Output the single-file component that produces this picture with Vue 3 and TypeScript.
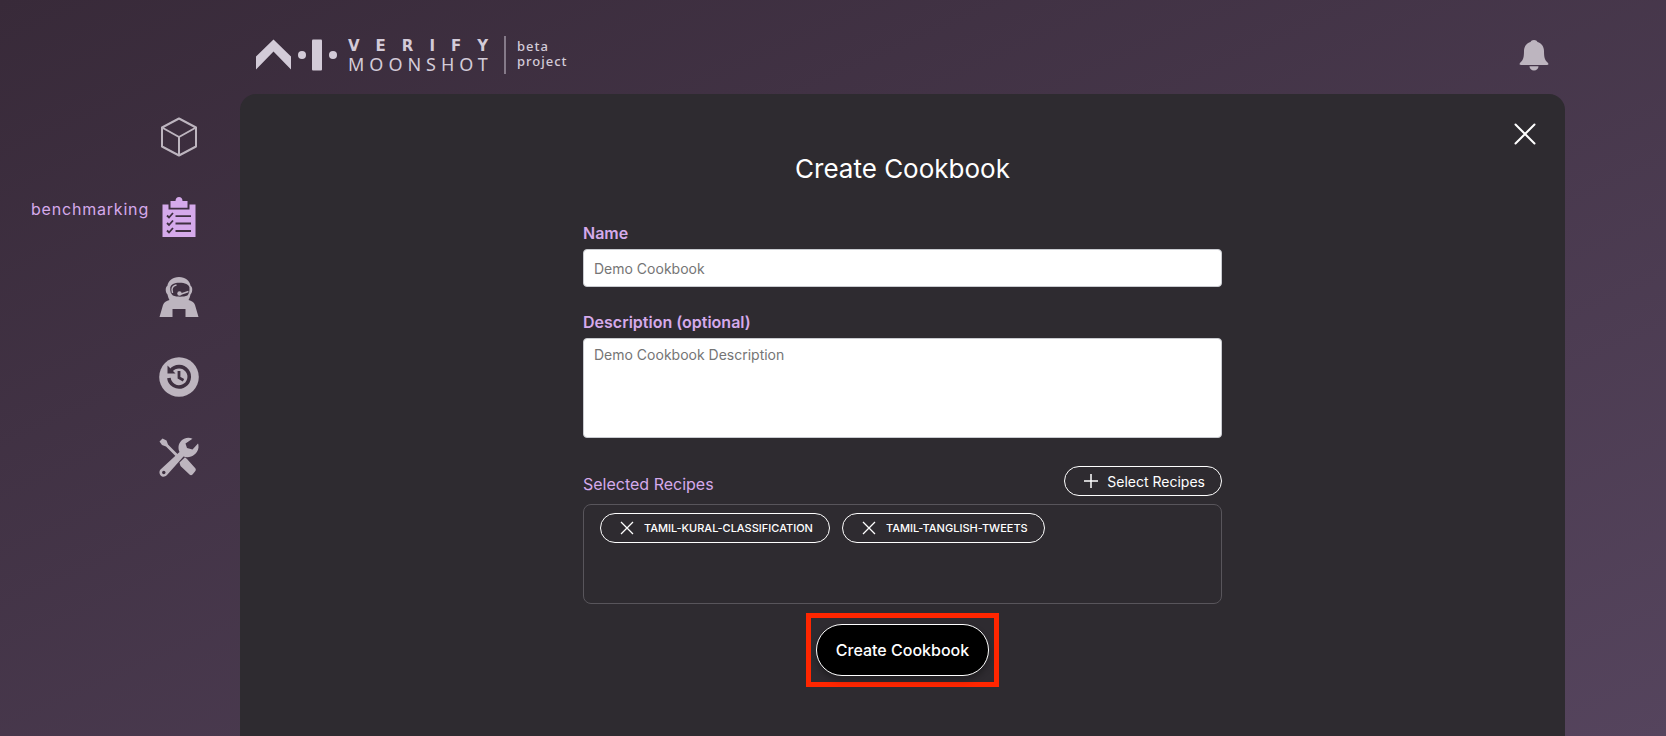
<script setup lang="ts">
import { ref } from 'vue'

interface NavItem {
  id: string
  label: string
}

const navItems: NavItem[] = [
  { id: 'home', label: 'home' },
  { id: 'benchmarking', label: 'benchmarking' },
  { id: 'redteaming', label: 'red teaming' },
  { id: 'history', label: 'history' },
  { id: 'utilities', label: 'utilities' },
]
const active = ref<string>('benchmarking')

const name = ref<string>('')
const description = ref<string>('')
const recipes = ref<string[]>(['TAMIL-KURAL-CLASSIFICATION', 'TAMIL-TANGLISH-TWEETS'])

function removeRecipe(recipe: string): void {
  recipes.value = recipes.value.filter((r) => r !== recipe)
}
</script>

<template>
  <div class="page">
    <header class="topbar">
      <a class="logo" href="#" aria-label="AI Verify Moonshot">
        <svg class="logo-mark" width="82" height="32" viewBox="0 0 82 32" aria-hidden="true">
          <path d="M0 17.500 17.500 0.500 35 17.500V30.500L17.500 12.500 0 30.500z" />
          <circle cx="46" cy="16" r="4" />
          <rect x="56" y="0.500" width="10" height="31" rx="1" />
          <circle cx="77" cy="16" r="4" />
        </svg>
        <span class="logo-words">
          <span class="verify">VERIFY</span>
          <span class="moonshot">MOONSHOT</span>
        </span>
        <span class="logo-beta">beta<br />project</span>
      </a>
      <button class="bell" type="button" aria-label="Notifications">
        <svg width="30" height="32" viewBox="0 0 30 32" aria-hidden="true">
          <path d="M15 1c1.800 0 3 .8 3.500 2C22.500 4.300 25 7.500 25 12c0 6 .6 9 4 12 .8 1.200.3 2-.8 2H1.800c-1.100 0-1.600-.8-.8-2C4.400 21 5 18 5 12c0-4.500 2.500-7.700 6.500-9C12 1.800 13.200 1 15 1zM10.500 27.200h9c0 2.500-2 4.300-4.500 4.300s-4.500-1.800-4.500-4.300z" />
        </svg>
      </button>
    </header>

    <nav class="sidebar" aria-label="Main">
      <a
        v-for="item in navItems"
        :key="item.id"
        href="#"
        class="nav-item"
        :class="{ active: item.id === active }"
        :aria-label="item.label"
        @click.prevent="active = item.id"
      >
        <span v-if="item.id === active" class="nav-label">{{ item.label }}</span>
        <svg v-if="item.id === 'home'" width="40" height="40" viewBox="0 0 40 40" aria-hidden="true">
          <path d="M20 1.500 37 10.500V29.500L20 38.500 3 29.500V10.500zM3 10.500 20 20 37 10.500M20 20V38.500" fill="none" stroke="currentColor" stroke-width="2" stroke-linejoin="round" />
        </svg>
        <svg v-else-if="item.id === 'benchmarking'" width="40" height="40" viewBox="0 0 40 40" aria-hidden="true">
          <path d="M3.500 7.500H9.500V12.500H30.500V7.500H36.500V40H3.500z" fill="currentColor" />
          <path d="M11.500 4H16.500C16.500 1.500 18 0 20 0S23.500 1.500 23.500 4H28.500V10.800H11.500z" fill="currentColor" />
          <path d="M8 18.500l2 2 4-4.500M8 26l2 2 4-4.500M8 33.500l2 2 4-4.500M16.500 19.200H32M16.500 26.500H32M16.500 34H32" fill="none" class="ink" stroke-width="1.800" />
        </svg>
        <svg v-else-if="item.id === 'redteaming'" width="40" height="40" viewBox="0 0 40 40" aria-hidden="true">
          <path d="M20 0c6.500 0 10.500 3.500 11.700 9 2.200 1 2 6.500-.2 8.500-.5 2-1 4-2 5.500 3 .8 5.500 2 6.500 5L39.500 40H26.500V32H13.500V40H.5L4 28c1-3 3.500-4.200 6.500-5-1-1.500-1.500-3.500-2-5.500C6.300 15.500 6.100 10 8.300 9 9.500 3.500 13.500 0 20 0z" fill="currentColor" />
          <path d="M20.500 5.800C26 5.800 30 7.500 30.400 10.500c.4 3.500-.4 6.500-2 8-4 1.600-10.500 1.600-14.500 0-2-1.500-3-4.500-2.600-8C11.800 7.500 15 5.800 20.500 5.800z" class="ink-fill" />
          <path d="M17.500 8C14.500 8.600 13.200 9.500 13 12.500L13.500 16" fill="none" stroke="currentColor" stroke-width="1.400" />
          <path d="M29.500 14.500 21.500 17.200" fill="none" stroke="currentColor" stroke-width="1.500" />
          <circle cx="20.500" cy="16.500" r="2.200" fill="currentColor" />
        </svg>
        <svg v-else-if="item.id === 'history'" width="40" height="40" viewBox="0 0 40 40" aria-hidden="true">
          <circle cx="20" cy="20" r="19.800" fill="currentColor" />
          <path d="M12 13.500A10.200 10.200 0 1 1 9.900 21" fill="none" class="ink" stroke-width="3.600" />
          <path d="M8.500 8.500V16.500H16.500z" class="ink-fill" />
          <path d="M20 14V20.800L24.500 23.300" fill="none" class="ink" stroke-width="2.800" />
        </svg>
        <svg v-else width="40" height="40" viewBox="0 0 40 40" aria-hidden="true">
          <path d="M.5 4.500 3.500 1.500 7.500 3.500 9 7.500 20 18.500 18 20.500 7 9.500 3 8z" fill="currentColor" />
          <path d="M20.500 25.500 26 20.200 28 22 36.500 31.500Q37.500 33 36 34.500L33.500 37.500Q32 38.800 30.500 37.500L21.500 29z" fill="currentColor" />
          <path d="M33.500 1.800C28 -1.500 20 2.500 19.500 10c0 2 .2 3.500 1 5L1.500 32.500c-2 2-1 6 1.500 7 2 .5 3.500 0 5-1.500L24.500 19.500c6 2.500 14-1.500 15-9 0-1.500 0-3-.5-4L33.500 12.500 28 11 26.500 6.500z" fill="currentColor" />
          <circle cx="4.800" cy="35.500" r="1.700" class="ink-fill" />
        </svg>
      </a>
    </nav>

    <main class="panel">
      <button class="close" type="button" aria-label="Close">
        <svg width="22" height="22" viewBox="0 0 22 22" aria-hidden="true">
          <path d="M1.500 1.500 20.500 20.500M20.500 1.500 1.500 20.500" fill="none" stroke="currentColor" stroke-width="2" stroke-linecap="round" />
        </svg>
      </button>
      <form class="form" @submit.prevent>
        <h1 class="title">Create Cookbook</h1>

        <div class="field">
          <label class="label" for="cookbook-name">Name</label>
          <input id="cookbook-name" v-model="name" class="control" type="text" placeholder="Demo Cookbook" />
        </div>

        <div class="field">
          <label class="label" for="cookbook-description">Description (optional)</label>
          <textarea id="cookbook-description" v-model="description" class="control area" placeholder="Demo Cookbook Description"></textarea>
        </div>

        <section class="recipes" aria-labelledby="recipes-title">
          <div class="recipes-head">
            <h2 id="recipes-title" class="recipes-title">Selected Recipes</h2>
            <button class="pill select" type="button">
              <svg width="14" height="14" viewBox="0 0 14 14" aria-hidden="true">
                <path d="M7 0V14M0 7H14" fill="none" stroke="currentColor" stroke-width="1.500" />
              </svg>
              Select Recipes
            </button>
          </div>
          <div class="recipes-box">
            <button v-for="recipe in recipes" :key="recipe" class="pill chip" type="button" @click="removeRecipe(recipe)">
              <svg width="14" height="14" viewBox="0 0 14 14" aria-hidden="true">
                <path d="M1 1 13 13M13 1 1 13" fill="none" stroke="currentColor" stroke-width="1.300" />
              </svg>
              {{ recipe }}
            </button>
          </div>
        </section>

        <div class="highlight">
          <button class="submit" type="submit">Create Cookbook</button>
        </div>
      </form>
    </main>
  </div>
</template>

<style>
html,
body {
  margin: 0;
  background: #3c2e3e;
}
</style>

<style scoped>
.page {
  --lilac: #d5aaeb;
  --ink: #3e3040;
  box-sizing: border-box;
  min-height: 100vh;
  padding-right: 101px;
  display: grid;
  grid-template-columns: 240px minmax(0, 1fr);
  grid-template-rows: 94px 1fr;
  background: linear-gradient(to bottom right, #382a39, #55445d);
  color: #fff;
  font-family: Inter, "Liberation Sans", sans-serif;
  font-size: 16px;
}

button {
  font: inherit;
  color: inherit;
  cursor: pointer;
}

.topbar {
  grid-column: 2;
  display: flex;
  align-items: center;
  justify-content: space-between;
  padding: 16px 16px 0;
}

.logo {
  display: flex;
  align-items: center;
  color: #d3cbd8;
  text-decoration: none;
}

.logo-mark {
  fill: currentColor;
}

.logo-words {
  display: flex;
  flex-direction: column;
  width: 155px;
  margin-left: 10px;
  padding-top: 2px;
}

.verify {
  font: 700 15px/16px "DejaVu Sans", sans-serif;
  letter-spacing: 16px;
}

.moonshot {
  font: 400 18px/20px "Noto Sans", sans-serif;
  letter-spacing: 5px;
}

.logo-beta {
  margin-left: 1px;
  padding: 3px 0 5px 11px;
  border-left: 2px solid #857a89;
  font: 500 13px/15px "Noto Sans", sans-serif;
  letter-spacing: 1px;
}

.bell,
.close {
  display: flex;
  padding: 0;
  border: 0;
  background: none;
}

.bell {
  color: #bdb5bf;
}

.bell svg {
  fill: currentColor;
}

.sidebar {
  grid-column: 1;
  display: flex;
  flex-direction: column;
  gap: 40px;
  padding: 23px 41px 0 0;
}

.nav-item {
  display: flex;
  justify-content: flex-end;
  gap: 10px;
  color: #bdb5bf;
  text-decoration: none;
}

.nav-item.active {
  color: var(--lilac);
}

.nav-item svg {
  flex: none;
}

.nav-label {
  line-height: 24px;
  letter-spacing: 0.05em;
}

.ink {
  stroke: var(--ink);
}

.ink-fill {
  fill: var(--ink);
}

.panel {
  position: relative;
  padding: 57px 24px 48px;
  border-radius: 16px 16px 0 0;
  background: #2e2b30;
}

.close {
  position: absolute;
  top: 29px;
  right: 29px;
}

.form {
  display: flex;
  flex-direction: column;
  max-width: 639px;
  margin: 0 auto;
}

.title {
  margin: 0 0 34px;
  font-size: 26px;
  font-weight: 400;
  line-height: 36px;
  text-align: center;
}

.field {
  display: flex;
  flex-direction: column;
  gap: 4px;
  margin-bottom: 23px;
}

.label {
  color: var(--lilac);
  font-weight: 600;
  line-height: 24px;
}

.control {
  box-sizing: border-box;
  width: 100%;
  height: 38px;
  padding: 8px 10px;
  border: 1px solid #c9cbd0;
  border-radius: 4px;
  background: #fff;
  color: #222;
  font: 400 14px/20px Inter, "Liberation Sans", sans-serif;
}

.control::placeholder {
  color: #757575;
  opacity: 1;
}

.area {
  height: 100px;
  padding-top: 6px;
  resize: none;
}

.recipes-head {
  display: flex;
  align-items: flex-start;
  justify-content: space-between;
  padding-top: 5px;
  margin-bottom: 8px;
}

.recipes-title {
  margin: 6px 0 0;
  color: var(--lilac);
  font-size: 16px;
  font-weight: 400;
  line-height: 24px;
}

.pill {
  box-sizing: border-box;
  display: inline-flex;
  align-items: center;
  height: 30px;
  border: 1px solid #fff;
  border-radius: 15px;
  background: transparent;
  white-space: nowrap;
}

.select {
  gap: 9px;
  padding: 0 16px 0 19px;
  font-size: 14px;
  font-weight: 400;
}

.recipes-box {
  box-sizing: border-box;
  display: flex;
  flex-wrap: wrap;
  align-content: flex-start;
  gap: 12px;
  min-height: 100px;
  padding: 8px 16px;
  border: 1px solid #58555b;
  border-radius: 8px;
}

.chip {
  gap: 10px;
  padding: 0 16px 0 19px;
  font-size: 11px;
  font-weight: 500;
}

.highlight {
  align-self: center;
  display: flex;
  margin-top: 9px;
  padding: 6px 5px;
  border: 5px solid #ff2600;
}

.submit {
  height: 52px;
  padding: 0 19px;
  border: 1px solid #fff;
  border-radius: 26px;
  background: #000;
  font-weight: 500;
  box-shadow: 0 4px 6px rgba(0, 0, 0, 0.3);
}
</style>
